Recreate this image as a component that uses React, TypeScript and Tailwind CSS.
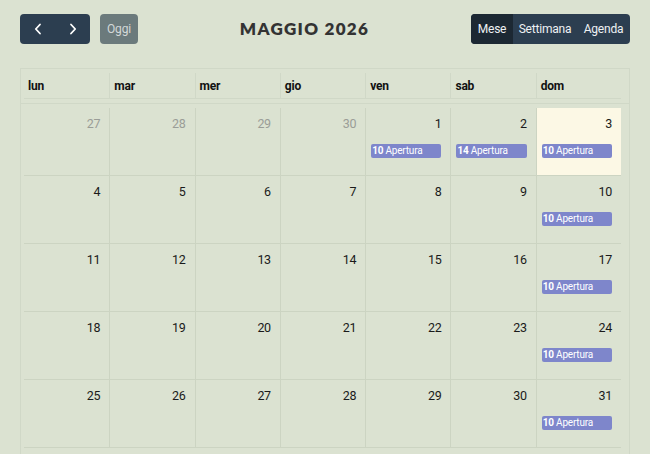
import React from "react";

const weeks: number[][] = [
  [27, 28, 29, 30, 1, 2, 3],
  [4, 5, 6, 7, 8, 9, 10],
  [11, 12, 13, 14, 15, 16, 17],
  [18, 19, 20, 21, 22, 23, 24],
  [25, 26, 27, 28, 29, 30, 31],
];
const days = ["lun", "mar", "mer", "gio", "ven", "sab", "dom"];
const events: Record<number, string> = { 1: "10", 2: "14", 3: "10", 10: "10", 17: "10", 24: "10", 31: "10" };

function Chevron({ dir }: { dir: "l" | "r" }) {
  return (
    <svg width="10" height="14" viewBox="0 0 10 14" fill="none" stroke="white" strokeWidth="1.8" strokeLinecap="round" strokeLinejoin="round">
      {dir === "l" ? <path d="M7 2.5 L2.8 7 L7 11.5" /> : <path d="M3 2.5 L7.2 7 L3 11.5" />}
    </svg>
  );
}

export default function App() {
  return (
    <div className="w-[650px] h-[454px] overflow-hidden bg-[#dbe2d1] font-['Roboto',sans-serif] text-[#222]">
      <div className="flex items-center justify-between px-5 pt-[14px]">
        <div className="flex items-center gap-[10px]">
          <div className="flex h-[30px] w-[70px] rounded-[4px] bg-[#2c3e50]">
            <div className="flex-1 flex items-center justify-center"><Chevron dir="l" /></div>
            <div className="flex-1 flex items-center justify-center"><Chevron dir="r" /></div>
          </div>
          <div className="h-[30px] w-[38px] rounded-[4px] bg-[#6b7a7c] flex items-center justify-center text-[12px] tracking-[-0.2px] text-[#d3d8d8]">Oggi</div>
        </div>
        <div className="font-['Lato',sans-serif] font-extrabold text-[17px] tracking-[1.3px] text-[#333]">MAGGIO 2026</div>
        <div className="flex h-[30px] rounded-[4px] overflow-hidden bg-[#2c3e50] text-[12px] tracking-[-0.2px] text-[#eef1f3]">
          <div className="w-[42px] bg-[#1c2833] flex items-center justify-center">Mese</div>
          <div className="w-[64px] flex items-center justify-center">Settimana</div>
          <div className="w-[53px] flex items-center justify-center">Agenda</div>
        </div>
      </div>
      <div className="mx-5 mt-[24px] border border-[#d0d8c7] border-b-0">
        <div className="pl-[3px] pr-[8px] pt-[4px] pb-[4px] border-b border-[#d0d8c7]">
          <div className="grid grid-cols-7 h-[26px] border-b border-[#d0d8c7]">
            {days.map((d, i) => (
              <div key={d} className={`flex items-center pl-[4px] pt-[1px] text-[12px] font-bold tracking-[-0.2px] text-[#111] ${i > 0 ? "border-l border-[#d0d8c7]" : ""}`}>{d}</div>
            ))}
          </div>
        </div>
        <div className="pl-[3px] pr-[8px] pt-[4px]">
          {weeks.map((w, wi) => (
            <div key={wi} className="grid grid-cols-7 h-[68px] border-b border-[#ccd4c2]">
              {w.map((n, di) => {
                const other = wi === 0 && di < 4;
                const today = wi === 0 && di === 6;
                const ev = !other ? events[n] : undefined;
                return (
                  <div key={di} className={`flex flex-col ${di > 0 ? "border-l border-[#ccd4c2]" : ""} ${today ? "bg-[#fcf8e5]" : ""}`}>
                    <div className={`text-right pr-[9px] pt-[7px] text-[12.5px] leading-[18px] tracking-[-0.3px] ${other ? "text-[#9a9d97]" : "text-[#1a1a1a]"}`}>{n}</div>
                    {ev && (
                      <div className="mt-[11px] ml-[5px] mr-[9px] h-[14px] rounded-[2px] bg-[#7e86cb] text-white text-[10px] leading-[14px] tracking-[-0.2px] pl-[1px] whitespace-nowrap overflow-hidden">
                        <span className="font-bold">{ev}</span> Apertura
                      </div>
                    )}
                  </div>
                );
              })}
            </div>
          ))}
          <div className="h-[20px]"></div>
        </div>
      </div>
    </div>
  );
}
